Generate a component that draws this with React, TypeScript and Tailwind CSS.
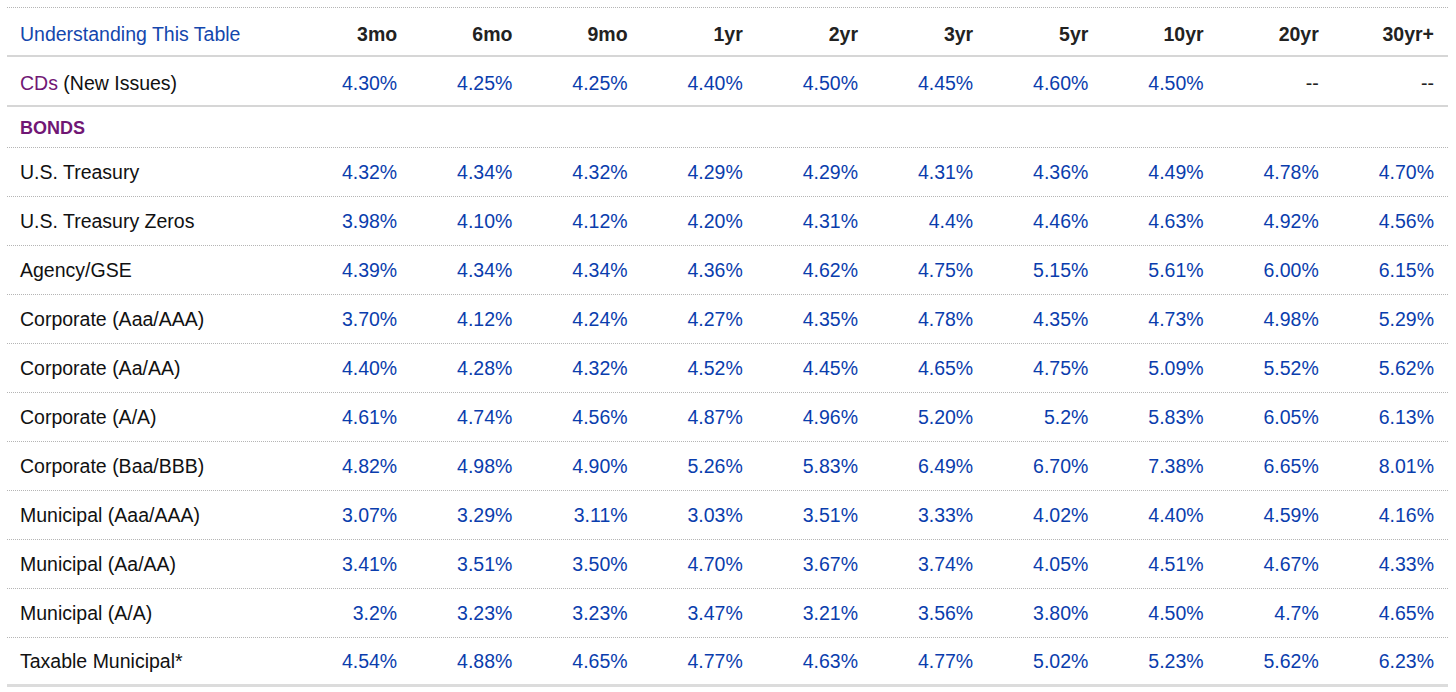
const cols = ['3mo', '6mo', '9mo', '1yr', '2yr', '3yr', '5yr', '10yr', '20yr', '30yr+'];

const rows: { label: string; values: string[] }[] = [
  { label: 'U.S. Treasury', values: ['4.32%', '4.34%', '4.32%', '4.29%', '4.29%', '4.31%', '4.36%', '4.49%', '4.78%', '4.70%'] },
  { label: 'U.S. Treasury Zeros', values: ['3.98%', '4.10%', '4.12%', '4.20%', '4.31%', '4.4%', '4.46%', '4.63%', '4.92%', '4.56%'] },
  { label: 'Agency/GSE', values: ['4.39%', '4.34%', '4.34%', '4.36%', '4.62%', '4.75%', '5.15%', '5.61%', '6.00%', '6.15%'] },
  { label: 'Corporate (Aaa/AAA)', values: ['3.70%', '4.12%', '4.24%', '4.27%', '4.35%', '4.78%', '4.35%', '4.73%', '4.98%', '5.29%'] },
  { label: 'Corporate (Aa/AA)', values: ['4.40%', '4.28%', '4.32%', '4.52%', '4.45%', '4.65%', '4.75%', '5.09%', '5.52%', '5.62%'] },
  { label: 'Corporate (A/A)', values: ['4.61%', '4.74%', '4.56%', '4.87%', '4.96%', '5.20%', '5.2%', '5.83%', '6.05%', '6.13%'] },
  { label: 'Corporate (Baa/BBB)', values: ['4.82%', '4.98%', '4.90%', '5.26%', '5.83%', '6.49%', '6.70%', '7.38%', '6.65%', '8.01%'] },
  { label: 'Municipal (Aaa/AAA)', values: ['3.07%', '3.29%', '3.11%', '3.03%', '3.51%', '3.33%', '4.02%', '4.40%', '4.59%', '4.16%'] },
  { label: 'Municipal (Aa/AA)', values: ['3.41%', '3.51%', '3.50%', '4.70%', '3.67%', '3.74%', '4.05%', '4.51%', '4.67%', '4.33%'] },
  { label: 'Municipal (A/A)', values: ['3.2%', '3.23%', '3.23%', '3.47%', '3.21%', '3.56%', '3.80%', '4.50%', '4.7%', '4.65%'] },
  { label: 'Taxable Municipal*', values: ['4.54%', '4.88%', '4.65%', '4.77%', '4.63%', '4.77%', '5.02%', '5.23%', '5.62%', '6.23%'] },
];

const cdValues = ['4.30%', '4.25%', '4.25%', '4.40%', '4.50%', '4.45%', '4.60%', '4.50%', '--', '--'];

const grid = 'grid grid-cols-[289px_repeat(10,1fr)] items-center';

export default function App() {
  return (
    <div className="bg-white w-[1456px] h-[692px] pt-[7px] pl-[7px] font-['Liberation_Sans',Arial,sans-serif] text-[19.5px] text-[#111]">
      <div className="w-[1441px]">
        {/* top dotted rule */}
        <div className="border-t border-dotted border-[#b5b5b5]" />

        {/* header */}
        <div className={`${grid} h-[49px] pt-[6px] border-b-2 border-[#d6d6d6]`}>
          <div className="pl-[13px] text-[#1447ad]">Understanding This Table</div>
          {cols.map((c) => (
            <div key={c} className="text-right pr-[14px] font-bold text-[#222]">
              {c}
            </div>
          ))}
        </div>

        {/* CDs */}
        <div className={`${grid} h-[50px] pt-[5px] border-b-2 border-[#d6d6d6]`}>
          <div className="pl-[13px]">
            <span className="text-[#711775]">CDs</span> (New Issues)
          </div>
          {cdValues.map((v, i) => (
            <div key={i} className={`text-right pr-[14px] ${v === '--' ? 'text-[#222]' : 'text-[#0a3dad]'}`}>
              {v}
            </div>
          ))}
        </div>

        {/* bonds section */}
        <div className="h-[41px] flex items-center pt-[2px] pl-[13px] border-b border-dotted border-[#b5b5b5]">
          <span className="text-[18px] font-bold text-[#711775]">BONDS</span>
        </div>

        {rows.map((r, idx) => (
          <div
            key={r.label}
            className={`${grid} h-[49px] pt-[2px] ${
              idx === rows.length - 1 ? 'border-b-[3px] border-[#dcdcdc]' : 'border-b border-dotted border-[#b5b5b5]'
            }`}
          >
            <div className="pl-[13px]">{r.label}</div>
            {r.values.map((v, i) => (
              <div key={i} className="text-right pr-[14px] text-[#0a3dad]">
                {v}
              </div>
            ))}
          </div>
        ))}
      </div>
    </div>
  );
}
